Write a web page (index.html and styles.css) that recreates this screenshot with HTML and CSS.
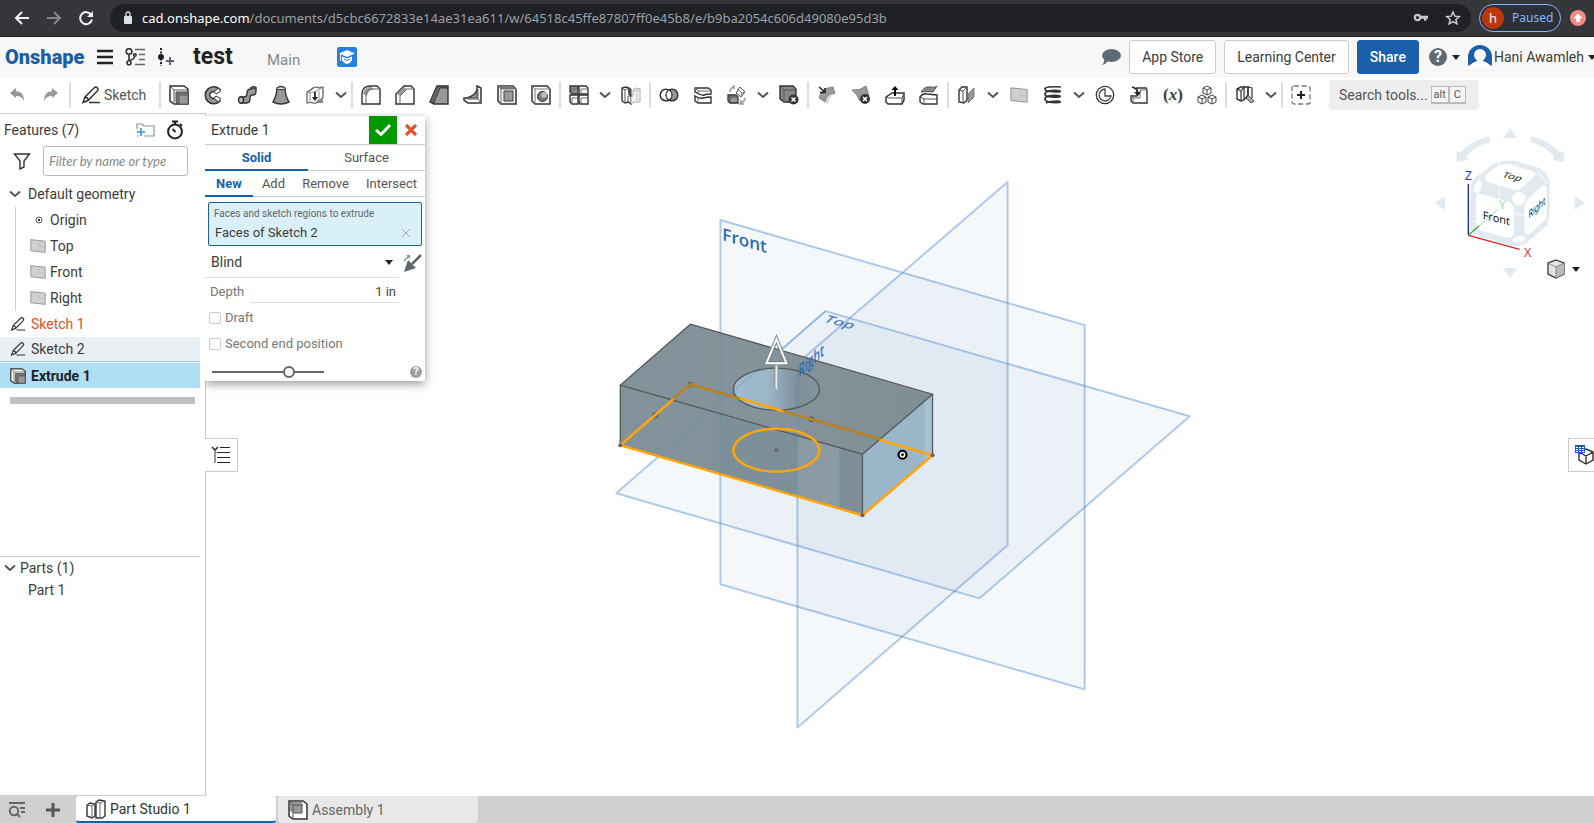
FILE: index.html
```
<!DOCTYPE html>
<html lang="en">
<head>
<meta charset="utf-8">
<title>test | Part Studio 1</title>
<link rel="stylesheet" href="styles.css">
</head>
<body>
<div class="browser">
  <button class="nav" aria-label="Back"><svg width="16" height="16" viewBox="0 0 16 16"><path d="M15 8H2M8 2L2 8l6 6" fill="none" stroke="#f1f3f4" stroke-width="2"/></svg></button>
  <button class="nav" aria-label="Forward"><svg width="16" height="16" viewBox="0 0 16 16"><path d="M1 8h13M8 2l6 6-6 6" fill="none" stroke="#86888a" stroke-width="2"/></svg></button>
  <button class="nav" aria-label="Reload"><svg width="16" height="16" viewBox="0 0 16 16"><path d="M13.300 5A6 6 0 1 0 14 9.500" fill="none" stroke="#f1f3f4" stroke-width="2"/><path d="M15 1v6H9z" fill="#f1f3f4"/></svg></button>
  <div class="omnibox">
    <svg width="10" height="14" viewBox="0 0 10 14"><rect x="1" y="5" width="8" height="8" rx="1" fill="#dee1e6"/><path d="M3 5V3a2 2 0 0 1 4 0v2" fill="none" stroke="#dee1e6" stroke-width="1.300"/></svg>
    <p class="url"><span>cad.onshape.com</span>/documents/d5cbc6672833e14ae31ea611/w/64518c45ffe87807ff0e45b8/e/b9ba2054c606d49080e95d3b</p>
    <button class="plain" aria-label="Passwords"><svg width="16" height="16" viewBox="0 0 16 16"><path d="M5 5.700h10v3h-1.500v2h-2.500v-2H8" fill="#c4c7c9"/><circle cx="4.500" cy="7.500" r="2.700" fill="none" stroke="#c4c7c9" stroke-width="2.200"/></svg></button>
    <button class="plain" aria-label="Bookmark"><svg width="16" height="16" viewBox="0 0 16 16"><path d="M8 2l1.800 4.100 4.500.4-3.400 3 1 4.400L8 11.600 4.100 13.900l1-4.400-3.400-3 4.500-.4z" fill="none" stroke="#d0d3d6" stroke-width="1.400"/></svg></button>
  </div>
  <button class="profile"><span class="initial">h</span>Paused</button>
  <button class="update" aria-label="Update"><svg width="16" height="16" viewBox="0 0 16 16"><circle cx="8" cy="8" r="8" fill="#f28b82"/><path d="M8 3.500l4.500 4.700H10v3.800H6V8.200H3.500z" fill="#fff"/></svg></button>
</div>

<header class="header">
  <a class="logo" href="#">Onshape</a>
  <button class="plain menu" aria-label="Menu"><svg width="16" height="16" viewBox="0 0 16 16"><path d="M0 2h16M0 8h16M0 14h16" stroke="#222" stroke-width="2.600"/></svg></button>
  <button class="plain tree" aria-label="Versions"><svg width="20" height="18" viewBox="0 0 20 18"><g fill="none" stroke="#333" stroke-width="1.600"><circle cx="4" cy="3.500" r="2.800"/><path d="M4 6.300v6.200M4 12q5 0 5.500-3.500"/><circle cx="4" cy="14.700" r="2"/><circle cx="9.800" cy="7" r="1.300"/></g><path d="M10 1.500h10M14 6.500h6M14 11.500h6M10 16.500h10" stroke="#5d6770" stroke-width="1.600"/></svg></button>
  <button class="plain insert" aria-label="Create version"><svg width="18" height="18" viewBox="0 0 18 18"><path d="M4 0v18" stroke="#222" stroke-width="2" stroke-dasharray="2 1.500"/><circle cx="4" cy="9" r="3" fill="#222"/><path d="M13 9v8M9 13h8" stroke="#5d6770" stroke-width="2"/></svg></button>
  <h1 class="doc">test</h1>
  <span class="branch">Main</span>
  <button class="plain edu" aria-label="Education"><svg width="20" height="20" viewBox="0 0 20 20"><rect width="20" height="20" rx="2" fill="#2680e0"/><path d="M10 3l8 3.500-8 3.500-8-3.500z" fill="#fff"/><path d="M5 9.500l5 2 5-2v4q-2 3-5 3.500-3-.5-5-3.500z" fill="#fff"/><path d="M7 12l3 1.500 3-1.500" stroke="#2680e0" fill="none"/><path d="M3.500 7v7" stroke="#fff"/></svg></button>
  <div class="account">
    <button class="plain" aria-label="Comments"><svg width="20" height="18" viewBox="0 0 20 18"><ellipse cx="10.500" cy="7.500" rx="9.500" ry="6.500" fill="#5f6a72"/><path d="M3 10l4 3q-2 3-6 4 3-3 2-7z" fill="#5f6a72"/></svg></button>
    <button class="btn">App Store</button>
    <button class="btn">Learning Center</button>
    <button class="btn share">Share</button>
    <button class="plain help" aria-label="Help"><span class="q">?</span><i class="caret"></i></button>
    <button class="plain user"><svg width="24" height="24" viewBox="0 0 24 24"><path d="M0 20V12a12 12 0 0 1 24 0v8q0 1-2 0l-4-2H6l-4 2q-2 1-2 0z" fill="#1b5faa"/><circle cx="12" cy="10" r="6" fill="#fff"/><path d="M9 14v2q-7 2-8 7h22q-1-5-8-7v-2z" fill="#fff"/></svg><span>Hani Awamleh</span><i class="caret"></i></button>
  </div>
</header>

<svg width="0" height="0" class="defs" aria-hidden="true">
  <symbol id="pencil" viewBox="0 0 20 20"><path d="M2 17.500L4 12 13.500 2.500q2-1 3.200.8 1 1.200-.2 2.400L7 15.500 2 17.500zM4 12q3 .5 3.500 3.500M8 17.500h11" fill="none" stroke="#333" stroke-width="1.500"/></symbol>
  <symbol id="chev" viewBox="0 0 12 8"><path d="M1 1.500l5 4.500 5-4.500" fill="none" stroke="#555" stroke-width="2"/></symbol>
  <symbol id="extrude" viewBox="0 0 20 20"><path d="M1 1h14l4 3v15H5l-4-3z" fill="#fff" stroke="#333" stroke-width="1.500"/><path d="M1 1l4 4v14M5 5h14" fill="none" stroke="#555"/><path d="M7 7h12v12H9l-2-2z" fill="#777" stroke="#444"/><path d="M10 10h9v9h-9z" fill="#999" stroke="#555"/></symbol>
  <symbol id="plane" viewBox="0 0 20 20"><path d="M1 2l18 2v14L1 16z" fill="#d0d0d0" stroke="#888"/><path d="M11 11h6M11 11v-5" stroke="#bbb"/></symbol>
</svg>

<nav class="toolbar" aria-label="Feature tools">
  <button class="tool" aria-label="Undo"><svg width="20" height="20" viewBox="0 0 20 20"><path d="M3 8l6-5v3.200q8 0 8 9.800-2-5-8-5v2z" fill="#999"/></svg></button>
  <button class="tool" aria-label="Redo"><svg width="20" height="20" viewBox="0 0 20 20"><path d="M17 8l-6-5v3.200q-8 0-8 9.800 2-5 8-5v2z" fill="#999"/></svg></button>
  <i class="sep"></i>
  <button class="sketch"><svg width="20" height="20"><use href="#pencil"/></svg>Sketch</button>
  <i class="sep"></i>
  <button class="tool" aria-label="Extrude"><svg width="20" height="20"><use href="#extrude"/></svg></button>
  <button class="tool" aria-label="Revolve"><svg width="20" height="20" viewBox="0 0 20 20"><path d="M17 4.500A8.500 8.500 0 1 0 17 16l-4-3-2 .3a3.400 3.400 0 1 1 0-6.600l2 .3z" fill="#999" stroke="#333" stroke-width="1.500"/><path d="M11 6.500L16 3l1.500 3.500L13 9zM11 13.500l5 3.500 1.500-3.500L13 11z" fill="#fff" stroke="#333"/></svg></button>
  <button class="tool" aria-label="Sweep"><svg width="20" height="20" viewBox="0 0 20 20"><path d="M4 12h3q3 0 3-4 0-4 4-4V2.500q2.500-1.500 5 0V6q0 4-3 4h-1q-2 0-2 4 0 4-4 4H4z" fill="#999" stroke="#333" stroke-width="1.400"/><ellipse cx="4" cy="15" rx="2.500" ry="3.200" fill="#bbb" stroke="#333" stroke-width="1.400"/><path d="M14 3q2.500 2 5 0" fill="none" stroke="#333"/></svg></button>
  <button class="tool" aria-label="Loft"><svg width="20" height="20" viewBox="0 0 20 20"><path d="M6 3q4-3 8 0 0 7 4 14-8 4-16 0 4-7 4-14z" fill="#999" stroke="#333" stroke-width="1.400"/><ellipse cx="10" cy="3.300" rx="4" ry="1.500" fill="#ddd" stroke="#333"/></svg></button>
  <button class="tool" aria-label="Thicken"><svg width="20" height="20" viewBox="0 0 20 20"><path d="M2 7q4-2 6-4t6 0q2-1 4-1v10q-1 3-4 4-4 3-6 2t-6 0z" fill="#fff" stroke="#555" stroke-width="1.200"/><path d="M2 7q4 1 7 0t9-5M14 6v10M5 8v10" fill="none" stroke="#888"/><path d="M12 15h6v3h-6z" fill="#888"/><path d="M10 7v7" stroke="#222" stroke-width="1.800"/><path d="M7 12l3 4 3-4z" fill="#222"/></svg></button>
  <button class="more" aria-label="More solid tools"><svg width="12" height="8"><use href="#chev"/></svg></button>
  <i class="sep"></i>
  <button class="tool" aria-label="Fillet"><svg width="20" height="20" viewBox="0 0 20 20"><path d="M1 19V9q0-8 9-8h6l3 3v15z" fill="#fff" stroke="#333" stroke-width="1.400"/><path d="M2 9q1-7 8-7l3 2q-6 0-7 7z" fill="#999"/><path d="M5 19v-8q0-7 8-7h6" fill="none" stroke="#666"/></svg></button>
  <button class="tool" aria-label="Chamfer"><svg width="20" height="20" viewBox="0 0 20 20"><path d="M1 19V9l8-8h7l3 3v15z" fill="#fff" stroke="#333" stroke-width="1.400"/><path d="M2 9l7-7 3 2-7 7z" fill="#999"/><path d="M5 19v-8l7-7h7" fill="none" stroke="#666"/></svg></button>
  <button class="tool" aria-label="Draft"><svg width="20" height="20" viewBox="0 0 20 20"><path d="M1 17L8 1h11v18H5z" fill="#999" stroke="#333" stroke-width="1.400"/><path d="M5 18L11 3h8L8 1 1 17z" fill="#666" stroke="#333" stroke-width=".8"/></svg></button>
  <button class="tool" aria-label="Rib"><svg width="20" height="20" viewBox="0 0 20 20"><path d="M14 1l4 2v15H5l-4-3v-2h3q9-3 10-9z" fill="#fff" stroke="#333" stroke-width="1.500"/><path d="M14 5v8H4q9-2 10-8z" fill="#999" stroke="#444"/><path d="M15 4v10H5l-4-1M15 14l3 4" fill="none" stroke="#555"/></svg></button>
  <button class="tool" aria-label="Shell"><svg width="20" height="20" viewBox="0 0 20 20"><path d="M1 1h15l3 3v15H4l-3-3z" fill="#eee" stroke="#333" stroke-width="1.500"/><path d="M1 1l3 3v15M4 4h15" fill="none" stroke="#777"/><path d="M7 6h9v10H7z" fill="#999" stroke="#444"/><path d="M1 1h15l3 3H4z" fill="#777"/></svg></button>
  <button class="tool" aria-label="Hole"><svg width="20" height="20" viewBox="0 0 20 20"><path d="M1 1h15l3 3v15H4l-3-3z" fill="#fff" stroke="#333" stroke-width="1.500"/><path d="M1 1l3 3v15M4 4h15" fill="none" stroke="#777"/><circle cx="11.500" cy="11.500" r="5" fill="#777" stroke="#333"/><circle cx="13" cy="10" r="3" fill="#bbb"/></svg></button>
  <i class="sep"></i>
  <button class="tool" aria-label="Pattern"><svg width="20" height="20" viewBox="0 0 20 20"><g stroke="#333" stroke-width="1.400"><path d="M1 1h8v8H3L1 7z" fill="#888"/><path d="M10 1h7l2 2v6h-9z" fill="#fff"/><path d="M1 10h8v9H3l-2-2z" fill="#fff"/><path d="M10 10h9v9h-8l-1-2z" fill="#fff"/></g><path d="M3 4h6v5M12 4h7M12 13h7M3 13h6M3 4v5M3 13v6M12 4v5M12 13v6" stroke="#666" fill="none"/></svg></button>
  <button class="more" aria-label="More pattern tools"><svg width="12" height="8"><use href="#chev"/></svg></button>
  <button class="tool" aria-label="Mirror"><svg width="20" height="20" viewBox="0 0 20 20"><path d="M1 3l4-1 3 1v6l2 2v8l-3-2-3 1-3-2z" fill="#fff" stroke="#333" stroke-width="1.400"/><path d="M1 3l3 2v13M4 5l4-2M7 17v-6l3 0" fill="none" stroke="#555"/><path d="M10 4L8 3v6l2 2z" fill="#777" stroke="#333"/><path d="M19 4l-4-1-3 2v6l-2 1v7l3-2h6z" fill="#f5f5f5" stroke="#aaa"/><path d="M16 6v11M12 5l4 1 3-2" fill="none" stroke="#bbb"/></svg></button>
  <i class="sep"></i>
  <button class="tool" aria-label="Boolean"><svg width="20" height="20" viewBox="0 0 20 20"><circle cx="13" cy="10" r="5.800" fill="#999" stroke="#333" stroke-width="1.500"/><circle cx="7" cy="10" r="5.800" fill="none" stroke="#333" stroke-width="1.500"/><path d="M10 5a5.800 5.800 0 0 1 0 10 5.800 5.800 0 0 1 0-10z" fill="#fff" stroke="#333"/></svg></button>
  <button class="tool" aria-label="Split"><svg width="20" height="20" viewBox="0 0 20 20"><path d="M2 7V3h13l3 2v4q-5 0-7 1T2 7zM2 11q4 3 8 2t8-1v6H5l-3-2z" fill="#fff" stroke="#333" stroke-width="1.400"/><path d="M2 3l3 3h13M5 6v3M5 13v5" fill="none" stroke="#666"/></svg></button>
  <button class="tool" aria-label="Transform"><svg width="20" height="20" viewBox="0 0 20 20"><path d="M1 10h8l2 2v6H3l-2-2z" fill="#999" stroke="#333" stroke-width="1.300"/><path d="M1 10l2 2h8M3 12v6" fill="none" stroke="#444"/><path d="M13 2l5 5-4 5-5-4z" fill="#fff" stroke="#555"/><path d="M10 4l5 4 3-1M15 8l-1 4" fill="none" stroke="#777"/><path d="M3 7q0-4 4-5M7 0v4M18 13q0 3-4 5M14 15l-1 4h4" fill="none" stroke="#999" stroke-width="1.500"/></svg></button>
  <button class="more" aria-label="More transform tools"><svg width="12" height="8"><use href="#chev"/></svg></button>
  <button class="tool" aria-label="Delete part"><svg width="20" height="20" viewBox="0 0 20 20"><path d="M1 1h13l3 3v13H5l-4-3z" fill="#888" stroke="#333" stroke-width="1.400"/><path d="M2 2l3 3h12M5 5v12" fill="none" stroke="#555"/><circle cx="14.500" cy="14.500" r="5" fill="#333"/><path d="M12.500 12.500l4 4m0-4l-4 4" stroke="#fff" stroke-width="1.600"/></svg></button>
  <i class="sep"></i>
  <button class="tool" aria-label="Modify fillet"><svg width="20" height="20" viewBox="0 0 20 20"><path d="M8 14q3-8 8-8l3 3q-7 1-8 10l-3-1z" fill="#d5d5d5"/><path d="M2 13Q4 4 11 3q3-1 5-1l2 6Q9 8 8 17z" fill="#999" stroke="#777" stroke-width=".8"/><path d="M2 2l6 5M8 3v4.500H3" fill="none" stroke="#222" stroke-width="1.500"/></svg></button>
  <button class="tool" aria-label="Delete face"><svg width="20" height="20" viewBox="0 0 20 20"><path d="M1 5q8 1 14-4l3 10q-6 1-9 5-3-7-8-11z" fill="#999" stroke="#666" stroke-width=".8"/><circle cx="14" cy="14" r="5" fill="#333"/><path d="M12 12l4 4m0-4l-4 4" stroke="#fff" stroke-width="1.600"/></svg></button>
  <button class="tool" aria-label="Move face"><svg width="20" height="20" viewBox="0 0 20 20"><path d="M1 12l6-4h12v7l-2 4H3l-2-2z" fill="#fff" stroke="#333" stroke-width="1.500"/><path d="M1 12l3 1h13l2-5M17 13v5" fill="none" stroke="#555"/><path d="M10 11V4" stroke="#000" stroke-width="2"/><path d="M6.500 5L10 1l3.500 4z"/></svg></button>
  <button class="tool" aria-label="Replace face"><svg width="20" height="20" viewBox="0 0 20 20"><path d="M2 7q4-6 9-5t7-1l-4 6q-6-1-12 0z" fill="#888" stroke="#555"/><path d="M1 12q3-4 7-3l10 1v9H4l-3-2z" fill="#fff" stroke="#333" stroke-width="1.400"/><path d="M1 12l4 2h13M5 14v5" fill="none" stroke="#555"/></svg></button>
  <i class="sep"></i>
  <button class="tool" aria-label="Offset surface"><svg width="20" height="20" viewBox="0 0 20 20"><path d="M2 5l3-3 5 0v13l-3 3-5-1z" fill="#fff" stroke="#333" stroke-width="1.400"/><path d="M6 18V6l4-4M2 5l4 1" fill="none" stroke="#555"/><path d="M11 9l6-6v9l-6 6z" fill="#999" stroke="#666" stroke-width=".8"/></svg></button>
  <button class="more" aria-label="More surface tools"><svg width="12" height="8"><use href="#chev"/></svg></button>
  <button class="tool" aria-label="Plane"><svg width="18" height="20"><use href="#plane"/></svg></button>
  <button class="tool" aria-label="Helix"><svg width="20" height="20" viewBox="0 0 20 20"><path d="M18 2Q2 1 2 4t14 3q3-1-1-1.500Q2 5 2 9t14 3q3-1-1-1.500Q2 10 2 14t14 3.500q3-1-1-1.500-8 0-12 2" fill="none" stroke="#333" stroke-width="1.700"/></svg></button>
  <button class="more" aria-label="More curve tools"><svg width="12" height="8"><use href="#chev"/></svg></button>
  <button class="tool" aria-label="Composite curve"><svg width="20" height="20" viewBox="0 0 20 20"><circle cx="10" cy="10" r="8.700" fill="#fff" stroke="#333" stroke-width="1.300"/><path d="M10 4a6 6 0 1 0 6 7h-6z" fill="none" stroke="#444" stroke-width="1.300"/></svg></button>
  <button class="tool" aria-label="Derived"><svg width="20" height="20" viewBox="0 0 20 20"><path d="M2 11h6V3h9l1 2v13H4l-2-2z" fill="#fff" stroke="#333" stroke-width="1.400"/><path d="M2 11l2 2h7V5h7M4 13v5" fill="none" stroke="#666"/><path d="M3 2q5 1 6 6" fill="none" stroke="#222" stroke-width="1.600"/><path d="M5 7h7l-3 4z" fill="#222"/></svg></button>
  <button class="tool variable" aria-label="Variable">(<i>x</i>)</button>
  <button class="tool" aria-label="Custom features"><svg width="20" height="20" viewBox="0 0 20 20"><g fill="#fff" stroke="#444"><path d="M10 1l4 2v5l-4 2-4-2V3zM6 3l4 2 4-2M10 5v5"/><path d="M5 10l4 2v5l-4 2-4-2v-5zM1 12l4 2 4-2M5 14v5"/><path d="M15 10l4 2v5l-4 2-4-2v-5zM11 12l4 2 4-2M15 14v5"/></g></svg></button>
  <i class="sep"></i>
  <button class="tool" aria-label="Sheet metal"><svg width="20" height="20" viewBox="0 0 20 20"><path d="M9 11l4-1 6 6-3 2z" fill="#aaa" stroke="#555"/><path d="M2 4l4-2 7 0v8l-4 5-3 1-4-2z" fill="#fff" stroke="#333" stroke-width="1.400"/><path d="M2 4l4 2v10M6 6l3-4v13M13 10v-8l4 1v10" fill="none" stroke="#333" stroke-width="1.200"/></svg></button>
  <button class="more" aria-label="More sheet metal tools"><svg width="12" height="8"><use href="#chev"/></svg></button>
  <i class="sep"></i>
  <button class="tool" aria-label="Add custom feature"><svg width="20" height="20" viewBox="0 0 20 20"><rect x="1" y="1" width="18" height="18" rx="2" fill="none" stroke="#777" stroke-width="1.300" stroke-dasharray="5 2.700"/><path d="M10 6v8M6 10h8" stroke="#222" stroke-width="2"/></svg></button>
  <button class="search">Search tools...<kbd>alt</kbd><kbd>C</kbd></button>
</nav>

<main class="work">
  <aside class="panel">
    <section class="features">
      <div class="title"><h2>Features (7)</h2>
        <button class="plain" aria-label="New folder"><svg width="20" height="20" viewBox="0 0 20 20"><path d="M2 9V4h5l2 2h10v10H9M4 16H2" fill="none" stroke="#8a949b" stroke-width="1.200"/><path d="M6 8v8M2 12h8" stroke="#5fa8d8" stroke-width="2"/></svg></button>
        <button class="plain" aria-label="Regeneration times"><svg width="20" height="20" viewBox="0 0 20 20"><circle cx="10" cy="11.500" r="6.900" fill="none" stroke="#222" stroke-width="2"/><path d="M7 1.500h6M10 1v4M15 4l2 2M7.500 9l3 3" stroke="#222" stroke-width="2"/></svg></button>
      </div>
      <div class="filter">
        <svg width="18" height="18" viewBox="0 0 18 18"><path d="M1.500 2h15L11 9v6l-4 2V9z" fill="none" stroke="#333" stroke-width="1.400"/></svg>
        <input type="text" placeholder="Filter by name or type" aria-label="Filter by name or type">
      </div>
      <button class="row group"><svg width="12" height="8"><use href="#chev"/></svg>Default geometry</button>
      <ul class="geometry">
        <li class="row"><svg width="14" height="14" viewBox="0 0 14 14"><circle cx="7" cy="7" r="3" fill="none" stroke="#555"/><circle cx="7" cy="7" r="1.200" fill="#333"/></svg>Origin</li>
        <li class="row"><svg width="16" height="16"><use href="#plane"/></svg>Top</li>
        <li class="row"><svg width="16" height="16"><use href="#plane"/></svg>Front</li>
        <li class="row"><svg width="16" height="16"><use href="#plane"/></svg>Right</li>
      </ul>
      <ul class="list">
        <li class="row error"><svg width="16" height="16"><use href="#pencil"/></svg>Sketch 1</li>
        <li class="row hover"><svg width="16" height="16"><use href="#pencil"/></svg>Sketch 2</li>
        <li class="row active"><svg width="16" height="16"><use href="#extrude"/></svg>Extrude 1</li>
      </ul>
      <div class="rollback"></div>
    </section>
    <section class="parts">
      <button class="row partshead"><svg width="12" height="8"><use href="#chev"/></svg>Parts (1)</button>
      <p class="part">Part 1</p>
    </section>
  </aside>

  <div class="viewport">
    <svg class="scene" viewBox="206 113 1388 683" role="img" aria-label="Extruded block with a hole">
      <defs>
        <linearGradient id="bore"><stop offset="0" stop-color="#9fbdd0"/><stop offset=".4" stop-color="#9bb6c8"/><stop offset=".75" stop-color="#7d8f9a"/><stop offset="1" stop-color="#83939c"/></linearGradient>
        <linearGradient id="lid" x2="1"><stop offset="0" stop-color="#82929b"/><stop offset=".5" stop-color="#859299"/><stop offset="1" stop-color="#7f8e96"/></linearGradient>
      </defs>
      <g fill="#2060a0" fill-opacity=".045" stroke="#4a86c5" stroke-opacity=".42" stroke-width="2" stroke-linejoin="round">
        <path d="M721 220L1085 325V689L721 584z"/>
        <path d="M798 363L1008 182V545L798 727z"/>
        <path d="M826 311L1190 416 980 598 617 493z"/>
      </g>
      <path d="M621 385L863 454V515L621 445z" fill="#7d8f99"/>
      <path d="M621 385L721 413V474L621 445z" fill="#82929a"/>
      <path d="M798 435L840 447V508L798 496z" fill="#8b9ba4"/>
      <path d="M863 454L933 394V455L863 515z" fill="#9bb6c8"/>
      <path d="M925 401l8-7v61l-8 7z" fill="#a8c0cf"/>
      <path d="M691 324L933 394 863 454 621 385z" fill="url(#lid)"/>
      <ellipse cx="777" cy="389" rx="43" ry="21" fill="url(#bore)"/>
      <g stroke="#4a86c5" stroke-opacity=".2" stroke-width="2"><path d="M721 332V474M798 363V496M826 311L674 443" fill="none"/></g>
      <g fill="none" stroke="#55595b" stroke-width="1.300"><path d="M691 324L933 394 863 454 621 385zM621 385V445M863 454V515M933 394V455"/><ellipse cx="777" cy="389" rx="43" ry="21"/></g>
      <g fill="#7d8488" stroke="#555b5f"><circle cx="656" cy="415" r="2.500"/><circle cx="812" cy="419" r="2.500"/><circle cx="777" cy="450" r="1.500"/><circle cx="691" cy="384" r="2"/></g>
      <g fill="none" stroke-width="2.500"><path d="M672 400L691 384L741 398.500M784 411L880 438.500" stroke="#b88222"/><path d="M740 398l44 13" stroke="#ffa50a"/><path d="M674 399L621 445 863 515 933 455 880 439.500" stroke="#ffa50a"/><ellipse cx="777" cy="450" rx="43" ry="21.500" stroke="#ffa50a"/></g>
      <g fill="#666"><circle cx="621" cy="445" r="2"/><circle cx="863" cy="515" r="2"/><circle cx="933" cy="455" r="2"/></g>
      <path d="M777 389V363" stroke="#8a9297" stroke-width="4"/><path d="M777 389V363" stroke="#e8edf0" stroke-width="2"/>
      <path d="M777 339l-10 24h20z" fill="none" stroke="#7b8388" stroke-width="4"/><path d="M777 339l-10 24h20z" fill="none" stroke="#fff" stroke-width="2"/>
      <circle cx="903" cy="454.500" r="4" fill="#fff" stroke="#000" stroke-width="2.200"/><circle cx="903" cy="454.500" r="1.400"/>
      <g class="planelabel">
        <text transform="matrix(1 .29 0 1 723 240)" font-size="17">Front</text>
        <text transform="matrix(1 .29 -.55 .55 823 321)" font-size="16" opacity=".8">Top</text>
        <text transform="matrix(.6 -.52 0 1 799 377)" font-size="17" opacity=".9">Right</text>
      </g>
    </svg>

    <svg class="viewcube" viewBox="0 9 600 531" role="img" aria-label="View cube">
      <g fill="#e2e9ef"><path d="M348 54l21 30h-42zM348 504l21-30h-42zM123 279l30-21v42zM572 279l-30-21v42z"/>
      <path d="M286 78l4 18q-42 10-72 42l4 12-34 6v-35l10 8q35-37 88-51zM412 78l-4 18q42 10 72 42l-4 12 34 6v-35l-10 8q-35-37-88-51z"/>
      <path d="M230 240q0-28 20-42l50-38q14-6 30-8h30l70 20q36 14 37 50v92l-6 30-64 56q-16 12-46 6l-96-28q-27-8-27-34z"/></g>
      <g fill="#fff"><path d="M252 250l84 22q24 6 24 28v64q0 24-26 18l-66-18q-22-6-22-26v-72q0-14 6-16z"/><path d="M272 203q0-6 10-14l30-20q14-10 34-6l70 21q14 5 6 14l-36 34q-12 10-34 6l-64-20q-16-5-16-15z"/><path d="M392 290q0-14 10-22l40-38q16-10 16 10v72q0 12-10 22l-36 34q-20 16-20-10z"/><circle cx="375" cy="266" r="20"/><ellipse cx="252" cy="230" rx="11" ry="20" transform="rotate(22 252 230)"/><ellipse cx="375" cy="388" rx="20" ry="9" transform="rotate(-8 375 388)"/></g>
      <path d="M316 232v34M360 308l32 9M430 180l28 42M314 150v18M450 322l14 10M226 334l20 0" stroke="#fff" stroke-width="3"/>
      <path d="M223 222v154" stroke="#22c" stroke-width="4"/><path d="M223 376l154 42" stroke="#d22" stroke-width="4"/><path d="M223 376l32-28" stroke="#3a3" stroke-width="4"/><path d="M255 348l56-50" stroke="#a5dca5" stroke-width="3"/>
      <g class="cubetext"><text class="axis" x="212" y="210" fill="#3434e0">Z</text><text class="axis" x="390" y="442" fill="#e23b45">X</text><text class="axis" x="314" y="298" fill="#a8e0a8">Y</text>
      <text transform="matrix(1 .25 0 1 266 326)" fill="#222">Front</text><text transform="matrix(1 .25 -.5 .65 322 200)" fill="#222">Top</text><text transform="matrix(.62 -.55 0 1 404 326)" fill="#222">Right</text></g>
    </svg>
    <button class="plain shade" aria-label="View options"><svg width="20" height="20" viewBox="0 0 20 20"><path d="M10 1l8 3v11l-8 4-8-4V4z" fill="#e4e4e4" stroke="#333" stroke-width="1.300"/><path d="M10 8l8-4v11l-8 4z" fill="#bbb"/><path d="M2 4l8 4 8-4M10 8v11" fill="none" stroke="#888"/></svg><i class="caret"></i></button>
    <button class="side left" aria-label="Feature list"><svg width="20" height="20" viewBox="0 0 20 20"><path d="M1 2l3 3 3-3" fill="none" stroke="#333" stroke-width="1.600"/><path d="M3 6h2v12H3z" fill="#999"/><path d="M9 2.500h10M6 7.500h13M6 12.500h13M6 17.500h13" stroke="#222"/></svg></button>
    <button class="side right" aria-label="Tables"><svg width="22" height="22" viewBox="0 0 22 22"><path d="M12 5l7 3v8l-7 4-7-4V8zM5 8l7 4 7-4M12 12v8" fill="#fff" stroke="#333" stroke-width="1.400"/><rect x="1" y="1" width="10" height="8" fill="#1b5faa"/><path d="M2 3h2v1H2zm3 0h2v1H5zm3 0h2v1H8zM2 5h2v1H2zm3 0h2v1H5zm3 0h2v1H8zM2 7h2v1H2zm3 0h2v1H5zm3 0h2v1H8z" fill="#fff"/></svg></button>

    <form class="dialog">
      <div class="dhead"><h3>Extrude 1</h3>
        <button type="button" class="ok" aria-label="Accept"><svg width="18" height="14" viewBox="0 0 18 14"><path d="M2 7l5 4.500L16 2" fill="none" stroke="#fff" stroke-width="3"/></svg></button>
        <button type="button" class="cancel" aria-label="Cancel"><svg width="12" height="12" viewBox="0 0 12 12"><path d="M1 1l10 10m0-10L1 11" stroke="#e0522d" stroke-width="3.200"/></svg></button>
      </div>
      <div class="tabs kind"><button type="button" class="on">Solid</button><button type="button">Surface</button></div>
      <div class="tabs op"><button type="button" class="on">New</button><button type="button">Add</button><button type="button">Remove</button><button type="button">Intersect</button></div>
      <div class="pick"><span class="hint">Faces and sketch regions to extrude</span><div class="picked">Faces of Sketch 2<button type="button" class="plain" aria-label="Remove"><svg width="8" height="8" viewBox="0 0 8 8"><path d="M0 0l8 8m0-8L0 8" stroke="#aaa"/></svg></button></div></div>
      <div class="end"><select aria-label="End type"><option>Blind</option></select><i class="caret"></i>
        <button type="button" class="plain" aria-label="Opposite direction"><svg width="20" height="20" viewBox="0 0 20 20"><path d="M18 2l-9 9" stroke="#5d6770" stroke-width="2.500"/><path d="M1 19L5 7l8 8z" fill="#5d6770"/><path d="M1 8l5-5" stroke="#8d969d" stroke-width="1.600"/><path d="M3 2h4v4z" fill="#8d969d"/></svg></button></div>
      <div class="depth"><label for="depth">Depth</label><input id="depth" type="text" value="1 in"></div>
      <label class="check"><input type="checkbox">Draft</label>
      <label class="check"><input type="checkbox">Second end position</label>
      <div class="dfoot"><input type="range" min="0" max="100" value="71" aria-label="Opacity"><span class="q small">?</span></div>
    </form>
  </div>
</main>

<footer class="tabbar">
  <button class="plain tabsearch" aria-label="Search tabs"><svg width="18" height="16" viewBox="0 0 18 16"><path d="M1 1h16M12 6h5M13 10h4" stroke="#666" stroke-width="1.800"/><circle cx="6" cy="9" r="4.200" fill="none" stroke="#666" stroke-width="2"/><path d="M9 12l3 3" stroke="#666" stroke-width="2"/></svg></button>
  <button class="plain tabadd" aria-label="Add tab"><svg width="16" height="16" viewBox="0 0 16 16"><path d="M8 1v14M1 8h14" stroke="#555" stroke-width="3"/></svg></button>
  <button class="tab current"><svg width="20" height="20" viewBox="0 0 20 20"><path d="M1 6l3-2 5 1v12l-3 2-5-2z" fill="#fff" stroke="#333" stroke-width="1.400"/><path d="M10 3l3-2 6 1v15l-3 2h-6z" fill="#fff" stroke="#333" stroke-width="1.400"/><path d="M1 6l5 1v12M6 7l3-2M10 3l4 1v15M14 4l4-2" fill="none" stroke="#666"/></svg>Part Studio 1</button>
  <button class="tab"><svg width="20" height="20" viewBox="0 0 20 20"><path d="M1 1h14l4 3v15H5l-4-3z" fill="#fff" stroke="#333" stroke-width="1.500"/><path d="M2 2h12v11H5l-3-2z" fill="#999"/><path d="M2 2l3 3v13M5 5h10M5 13h9V5" fill="none" stroke="#555"/></svg>Assembly 1</button>
</footer>
</body>
</html>
```
FILE: styles.css
```
* { box-sizing: border-box; }
body { margin: 0; min-height: 100vh; display: flex; flex-direction: column; overflow: hidden; background: #fff; color: #3c3c3c; font: 14px/20px Roboto, "Noto Sans", sans-serif; }
button, input, select { font: inherit; color: inherit; }
button { padding: 0; border: 0; background: none; }
h1, h2, h3, p, ul { margin: 0; padding: 0; font-weight: 400; font-size: 14px; }
ul { list-style: none; }
svg { display: block; flex: none; }
.defs { position: absolute; }
.plain { display: flex; align-items: center; justify-content: center; }
.caret { border: 4px solid transparent; border-top: 5px solid #222; border-bottom: 0; }
.q { width: 18px; height: 18px; border-radius: 50%; background: #5f6a72; color: #fff; font-weight: 700; font-size: 16px; line-height: 18px; text-align: center; }

.browser { display: flex; align-items: center; height: 37px; padding: 0 8px 0 14px; background: #35363a; border-bottom: 1px solid #222; font-family: "Noto Sans", sans-serif; }
.nav { width: 16px; margin-right: 16px; }
.omnibox { flex: 1; display: flex; align-items: center; gap: 16px; height: 28px; margin-right: 8px; padding: 0 10px 0 13px; border-radius: 14px; background: #202124; min-width: 0; }
.url { flex: 1; margin-left: -7px; color: #9aa0a6; white-space: nowrap; overflow: hidden; font-size: 13px; }
.url span { color: #fff; }
.profile { display: flex; align-items: center; gap: 8px; width: 82px; height: 28px; padding-left: 2px; border: 1px solid #8ab4f8; border-radius: 14px; background: #2a2f38; color: #8ab4f8; font-size: 12px; }
.initial { width: 22px; height: 22px; border-radius: 50%; background: #bf360c; color: #fff; font-size: 13px; line-height: 22px; }
.update { margin-left: 9px; }

.header { display: flex; align-items: center; height: 40px; padding-left: 5px; background: #f7f7f7; white-space: nowrap; }
.logo { width: 92px; color: #1b5faa; font-weight: 900; font-size: 20px; text-decoration: none; }
.tree { margin-left: 12px; }
.insert { margin-left: 12px; }
.doc { width: 74px; margin-left: 18px; color: #222; font-weight: 700; font-size: 23px; }
.branch { width: 70px; color: #888; font-size: 15px; line-height: 20px; padding-top: 5px; }
.account { display: flex; align-items: center; gap: 8px; margin-left: auto; }
.btn { height: 34px; padding: 0 12px; border: 1px solid #ccc; border-radius: 3px; background: #fff; }
.share { border-color: #1b5faa; background: #1b5faa; color: #fff; font-weight: 500; }
.help { gap: 5px; margin-left: 2px; }
.user { gap: 2px; margin-right: -2px; }
.user .caret { margin-left: 2px; }

.toolbar { display: flex; align-items: center; height: 36px; white-space: nowrap; }
.tool { display: flex; justify-content: center; width: 34px; }
.more { display: flex; justify-content: center; width: 18px; }
.sep { width: 2px; height: 26px; margin: 0 1px; background: #ddd; }
.sketch { display: flex; align-items: center; gap: 3px; width: 86px; padding-left: 9px; color: #555; }
.variable { font: 700 17px/20px "Liberation Serif", serif; }
.search { display: flex; align-items: center; height: 30px; margin-left: 11px; padding: 0 13px 0 10px; border-radius: 3px; background: #eee; color: #555; }
kbd { height: 18px; padding: 0 2px; border: 1px solid #bbb; border-bottom-width: 2px; background: #f5f5f5; font: 11px/15px Roboto, sans-serif; }
kbd:first-of-type { margin-left: 3px; }
kbd:last-of-type { padding: 0 4px; }

.work { flex: 1; display: flex; min-height: 0; }
.panel { display: flex; flex-direction: column; width: 206px; padding-right: 5px; border: 1px solid #ccc; border-left: 0; }
.features { flex: 1; }
.title { display: flex; align-items: center; gap: 10px; height: 32px; padding: 0 15px 0 4px; }
.title h2 { flex: 1; }
.filter { display: flex; align-items: center; gap: 12px; height: 30px; margin-bottom: 5px; padding: 0 12px 0 13px; }
.filter input { flex: 1; min-width: 0; height: 30px; padding: 0 5px; border: 1px solid #bbb; border-radius: 3px; font: italic 13px/20px Lato, sans-serif; }
.filter input::placeholder { color: #888; }
.row { display: flex; align-items: center; gap: 5px; width: 100%; height: 26px; padding-left: 10px; text-align: left; }
.group { gap: 7px; padding-left: 9px; }
.geometry { margin: 0 0 0 15px; border-left: 1px solid #ccc; }
.geometry .row { gap: 4px; padding-left: 14px; }
.geometry .row:first-child { padding-left: 16px; }
.error { color: #e0522d; }
.hover { height: 25px; background: #eaeff4; border-bottom: 1px solid #8cc8ec; margin-bottom: 1px; }
.active { height: 25px; background: #b0def5; color: #222; font-weight: 700; }
.rollback { height: 7px; margin: 9px 5px 0 10px; background: #c0c0c0; }
.parts { height: 239px; border-top: 1px solid #ccc; }
.partshead { height: 22px; padding-left: 4px; gap: 4px; }
.part { padding: 1px 0 0 28px; }

.viewport { position: relative; flex: 1; min-width: 0; overflow: hidden; margin-left: -1px; }
.scene { width: 100%; height: 100%; }
.planelabel { font-family: "Open Sans", sans-serif; font-weight: 600; fill: #2c69b5; }
.viewcube { position: absolute; top: 0; right: 0; width: 200px; height: 177px; }
.cubetext { font: 33px "Noto Sans", sans-serif; }
.axis { font-size: 38px; }
.shade { position: absolute; top: 146px; right: 14px; gap: 6px; }
.side { position: absolute; top: 325px; width: 34px; height: 34px; border: 1px solid #ccc; background: #fff; }
.left { left: 0; width: 33px; padding-left: 6px; border-left: 0; }
.right { right: -8px; padding-left: 5px; width: 34px; }
.right svg { margin-right: -8px; }

.dialog { position: absolute; top: 3px; left: 0; width: 220px; height: 265px; background: #fff; box-shadow: 0 3px 9px rgba(0, 0, 0, .4); }
.dhead { display: flex; align-items: center; height: 29px; padding-left: 6px; border-bottom: 1px solid #ccc; }
.dhead h3 { flex: 1; }
.ok { display: flex; align-items: center; justify-content: center; width: 28px; height: 28px; background: #090; }
.cancel { display: flex; justify-content: center; width: 28px; }
.tabs { display: flex; height: 26px; border-bottom: 1px solid #ccc; font-size: 13px; }
.tabs button { height: 26px; padding: 2px 8px 0; border-bottom: 2px solid transparent; color: #555; white-space: nowrap; }
.tabs .on { border-color: #1b5faa; color: #1b5faa; font-weight: 700; }
.kind button { flex: 1; }
.kind .on { flex: none; width: 103px; }
.op { justify-content: space-between; }
.op .on { padding: 2px 11px 0; }
.pick { margin: 5px 3px 0; height: 44px; padding: 2px 5px; border: 1px solid #1b5faa; border-radius: 2px; background: #daf0f8; }
.hint { display: block; color: #666; font-size: 10px; line-height: 18px; white-space: nowrap; }
.picked { display: flex; justify-content: space-between; padding: 0 6px 0 1px; font-size: 13px; line-height: 20px; }
.end { display: flex; align-items: center; height: 33px; }
.end select { appearance: none; width: 194px; height: 30px; margin-right: -14px; padding-left: 6px; border: 0; border-bottom: 1px solid #ddd; background: none; }
.end .plain { margin-left: 10px; }
.depth { display: flex; align-items: center; gap: 6px; height: 26px; padding: 0 26px 0 5px; color: #777; font-size: 13px; }
.depth input { flex: 1; min-width: 0; height: 22px; padding: 0 3px; border: 0; border-bottom: 1px solid #ddd; text-align: right; color: #444; }
.check { display: flex; align-items: center; gap: 4px; height: 26px; padding-left: 4px; color: #777; font-size: 13px; }
.check input { appearance: none; width: 12px; height: 12px; margin: 0; border: 1px solid #ccc; border-radius: 2px; background: #fff; }
.dfoot { display: flex; align-items: center; justify-content: space-between; height: 30px; padding: 0 3px 0 7px; }
.dfoot input { appearance: none; width: 112px; height: 2px; margin: 0; background: #666; }
.dfoot input::-webkit-slider-thumb { appearance: none; width: 12px; height: 12px; border: 2px solid #666; border-radius: 50%; background: #fff; }
.small { width: 12px; height: 12px; background: #9a9fa3; font-size: 11px; line-height: 12px; }

.tabbar { display: flex; align-items: center; height: 27px; background: #d0d0d0; }
.tabsearch { margin-left: 8px; }
.tabadd { margin: 0 15px 0 19px; }
.tab { display: flex; align-items: center; gap: 4px; width: 200px; height: 27px; margin-right: 2px; padding-left: 10px; border-radius: 0 0 4px 4px; background: #e8e8e8; color: #666; }
.current { border-bottom: 2px solid #1b5faa; border-radius: 3px; background: #fff; color: #333; }
```
